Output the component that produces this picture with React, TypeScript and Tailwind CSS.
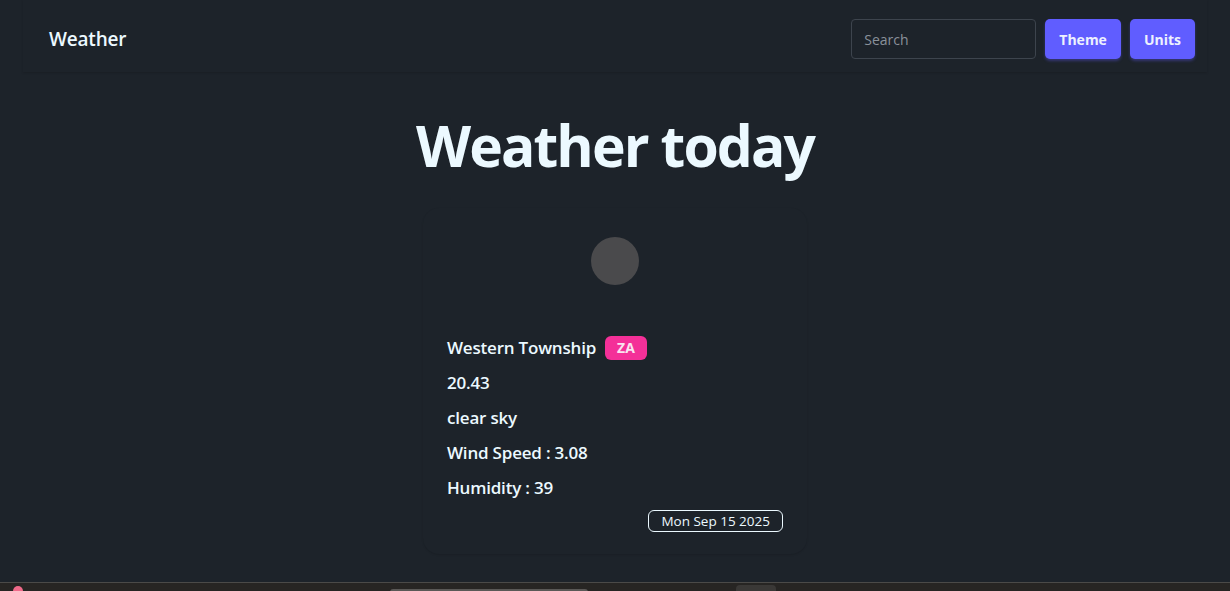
import { useState } from 'react';

const font = { fontFamily: '"Open Sans", "Noto Sans", sans-serif' };

const Navbar = () => {
    const [query, setQuery] = useState('');
    return (
        <div className="px-[23px]">
            <nav className="h-[72px] pt-[6px] flex items-center justify-between pl-[26px] pr-[12px] shadow-[0_1px_2px_rgba(0,0,0,0.15)]">
                <span className="text-[19px] font-semibold tracking-[-0.2px] text-[#ecf9ff]">Weather</span>
                <div className="flex items-center gap-[9px]">
                    <input
                        value={query}
                        onChange={(e) => setQuery(e.target.value)}
                        placeholder="Search"
                        className="w-[185px] h-[40px] px-[12px] text-[14px] rounded-[4px] bg-[#1d232a] border border-[#3d444d] text-[#ecf9ff] placeholder:text-[#8a919a] outline-none"
                    />
                    <button className="h-[40px] px-[14px] rounded-[5px] bg-[#605dff] text-[14px] font-bold text-[#edf1fe] shadow-[0_2px_3px_rgba(96,93,255,0.35)]">
                        Theme
                    </button>
                    <button className="h-[40px] px-[14px] rounded-[5px] bg-[#605dff] text-[14px] font-bold text-[#edf1fe] shadow-[0_2px_3px_rgba(96,93,255,0.35)]">
                        Units
                    </button>
                </div>
            </nav>
        </div>
    );
};

const WeatherCard = () => {
    const rows = ['20.43', 'clear sky', 'Wind Speed : 3.08', 'Humidity : 39'];
    return (
        <div className="w-96 rounded-2xl bg-[#1d232a] shadow-[0_1px_2px_rgba(0,0,0,0.12)]">
            <figure className="flex justify-center pt-[29px]">
                <div className="w-12 h-12 rounded-full bg-[#4a4a4c]" />
            </figure>
            <div className="px-6 pt-[49px] pb-[22px] text-[#ecf9ff]">
                <div className="flex flex-col gap-[8px] text-[17px] font-semibold tracking-[-0.2px]">
                    <div className="h-[27px] flex items-center gap-[9px]">
                        <span>Western Township</span>
                        <span className="h-[24px] px-[12px] rounded-[6px] bg-[#f43098] text-[14px] font-bold tracking-normal text-[#f9e4f0] flex items-center">
                            ZA
                        </span>
                    </div>
                    {rows.map((row) => (
                        <div key={row} className="h-[27px] flex items-center">{row}</div>
                    ))}
                </div>
                <div className="flex justify-end mt-[9px]">
                    <span className="h-[22px] px-[12px] rounded-[6px] border border-[#ecf9ff] text-[13.5px] flex items-center">
                        Mon Sep 15 2025
                    </span>
                </div>
            </div>
        </div>
    );
};

export default function App() {
    return (
        <div className="h-[591px] flex flex-col bg-[#1d232a] overflow-hidden" style={font}>
            <div className="flex-1">
                <Navbar />
                <main className="flex flex-col items-center">
                    <h1 className="mt-[43px] text-[57px] leading-[60px] font-bold tracking-[-1.9px] text-[#ecf9ff]">
                        Weather today
                    </h1>
                    <div className="mt-[33px]">
                        <WeatherCard />
                    </div>
                </main>
            </div>
            <div className="h-[9px] bg-[#272523] border-t border-[#4b4a48] relative">
                <span className="absolute left-[13px] top-[3px] w-[10px] h-[10px] rounded-full bg-[#f06a8a]" />
                <span className="absolute left-[390px] top-[6px] w-[198px] h-[3px] bg-[#5a5856] rounded-t" />
                <span className="absolute left-[736px] top-[2px] w-[40px] h-[8px] bg-[#3a3836] rounded-t" />
            </div>
        </div>
    );
}
